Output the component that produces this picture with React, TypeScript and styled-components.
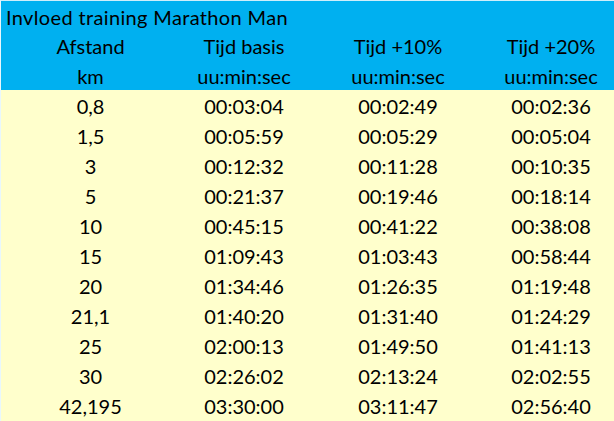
import styled, {createGlobalStyle} from "styled-components";

const GlobalStyle = createGlobalStyle`
  html, body {
    margin: 0;
    padding: 0;
    background: #ffffcc;
  }
`;

const Sheet = styled.div`
  width: 614px;
  height: 421px;
  box-sizing: border-box;
  border-top: 1px solid #cfeefb;
  border-left: 1px solid #e8f7fd;
  background: #ffffcc;
  font-family: Lato, "Liberation Sans", sans-serif;
  font-size: 20px;
  color: #000;
  overflow: hidden;
`;

const Header = styled.div`
  background: #00b0f0;
`;

const Title = styled.div`
  height: 29px;
  line-height: 33px;
  padding-left: 5px;
  letter-spacing: 0.35px;
  white-space: nowrap;
`;

const Row = styled.div`
  display: grid;
  grid-template-columns: 179px 128px 180px 126px;
  height: 30px;
  line-height: 33px;
`;

const Cell = styled.div`
  text-align: center;
  white-space: nowrap;
`;

type Line = [string, string, string, string];

const rows: Line[] = [
  ["0,8", "00:03:04", "00:02:49", "00:02:36"],
  ["1,5", "00:05:59", "00:05:29", "00:05:04"],
  ["3", "00:12:32", "00:11:28", "00:10:35"],
  ["5", "00:21:37", "00:19:46", "00:18:14"],
  ["10", "00:45:15", "00:41:22", "00:38:08"],
  ["15", "01:09:43", "01:03:43", "00:58:44"],
  ["20", "01:34:46", "01:26:35", "01:19:48"],
  ["21,1", "01:40:20", "01:31:40", "01:24:29"],
  ["25", "02:00:13", "01:49:50", "01:41:13"],
  ["30", "02:26:02", "02:13:24", "02:02:55"],
  ["42,195", "03:30:00", "03:11:47", "02:56:40"],
];

function TableRow({cells}: {cells: Line}) {
  return (
    <Row>
      {cells.map((c, i) => <Cell key={i}>{c}</Cell>)}
    </Row>
  );
}

export default function App() {
  return (
    <>
      <GlobalStyle />
      <Sheet>
        <Header>
          <Title>Invloed training Marathon Man</Title>
          <TableRow cells={["Afstand", "Tijd basis", "Tijd +10%", "Tijd +20%"]} />
          <TableRow cells={["km", "uu:min:sec", "uu:min:sec", "uu:min:sec"]} />
        </Header>
        {rows.map((r) => <TableRow key={r[0]} cells={r} />)}
      </Sheet>
    </>
  );
}
